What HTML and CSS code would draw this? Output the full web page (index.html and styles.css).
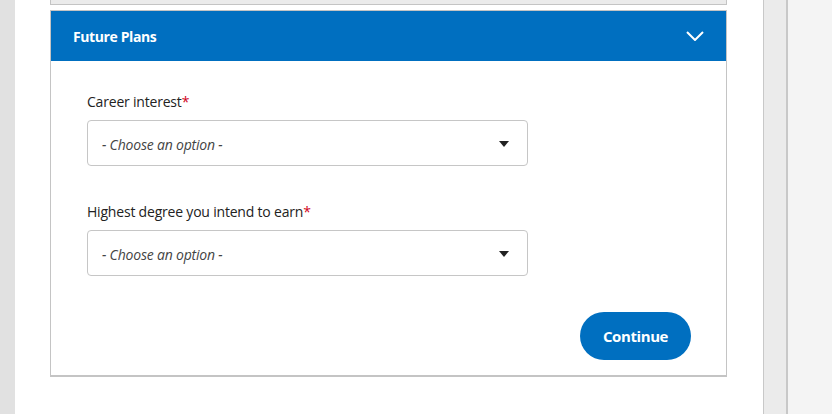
FILE: index.html
```html
<!DOCTYPE html>
<html>
<head>
<meta charset="utf-8">
<link rel="stylesheet" href="styles.css">
</head>
<body>
<div class="page">
  <div class="left-strip"></div>
  <main class="main">
    <div class="prev-section"></div>
    <section class="panel">
      <header class="panel-head">
        <span class="panel-title">Future Plans</span>
        <svg class="chev" width="18" height="10" viewBox="0 0 18 10"><path d="M1 1 L9 9 L17 1" fill="none" stroke="#fff" stroke-width="2"/></svg>
      </header>
      <div class="panel-body">
        <div class="field">
          <label class="label">Career interest<span class="req">*</span></label>
          <div class="select">
            <span class="placeholder">- Choose an option -</span>
            <svg class="caret" width="10" height="6" viewBox="0 0 10 6"><path d="M0 0 H10 L5 6 Z" fill="#222"/></svg>
          </div>
        </div>
        <div class="field">
          <label class="label">Highest degree you intend to earn<span class="req">*</span></label>
          <div class="select">
            <span class="placeholder">- Choose an option -</span>
            <svg class="caret" width="10" height="6" viewBox="0 0 10 6"><path d="M0 0 H10 L5 6 Z" fill="#222"/></svg>
          </div>
        </div>
        <div class="actions">
          <button class="btn">Continue</button>
        </div>
      </div>
    </section>
  </main>
  <div class="scroll-strip"></div>
  <div class="right-area"></div>
</div>
</body>
</html>
```
FILE: styles.css
```css
* { box-sizing: border-box; }
html, body { margin: 0; padding: 0; }
body {
  font-family: "Open Sans", "Noto Sans", sans-serif;
  background: #fff;
  height: 414px;
  overflow: hidden;
}
.page {
  display: flex;
  height: 414px;
}
.left-strip {
  width: 15px;
  background: #e1e1e1;
}
.main {
  width: 748px;
  background: #fff;
  padding-left: 35px;
}
.prev-section {
  width: 677px;
  height: 5px;
  background: #ebebeb;
  border: 1px solid #c4c4c4;
  border-top: none;
  margin-bottom: 5px;
}
.panel {
  width: 677px;
  border: 1px solid #c4c4c4;
  border-bottom-width: 2px;
}
.panel-head {
  height: 50px;
  background: #006fc0;
  display: flex;
  align-items: center;
  justify-content: space-between;
  padding: 0 22px 0 22px;
}
.panel-title {
  color: #fff;
  font-weight: 700;
  font-size: 14px;
  letter-spacing: -0.4px;
}
.chev { display: block; margin-top: -1px; }
.panel-body {
  padding: 31px 35px 15px 36px;
}
.field {
  margin-bottom: 36px;
}
.field:last-of-type { margin-bottom: 34px; }
.label {
  display: block;
  font-size: 14px;
  line-height: 20px;
  color: #222;
  margin-bottom: 8px;
  letter-spacing: -0.2px;
}
.req { color: #d0021b; }
.select {
  width: 441px;
  height: 46px;
  border: 1px solid #c6c6c6;
  border-radius: 4px;
  display: flex;
  align-items: center;
  justify-content: space-between;
  padding: 3px 18px 0 14px;
}
.placeholder {
  font-style: italic;
  font-size: 14px;
  color: #444;
  letter-spacing: -0.2px;
}
.caret { display: block; margin-top: -2px; }
.actions {
  display: flex;
  justify-content: flex-end;
}
.btn {
  width: 111px;
  height: 48px;
  border: none;
  border-radius: 24px;
  background: #006fc0;
  color: #fff;
  font-family: "Open Sans", "Noto Sans", sans-serif;
  font-weight: 700;
  font-size: 15px;
  letter-spacing: -0.4px;
}
.scroll-strip {
  width: 25px;
  background: #ebebeb;
  border-left: 1px solid #c8c8c8;
  border-right: 2px solid #c8c8c8;
}
.right-area {
  flex: 1;
  background: #f4f4f4;
}
```
